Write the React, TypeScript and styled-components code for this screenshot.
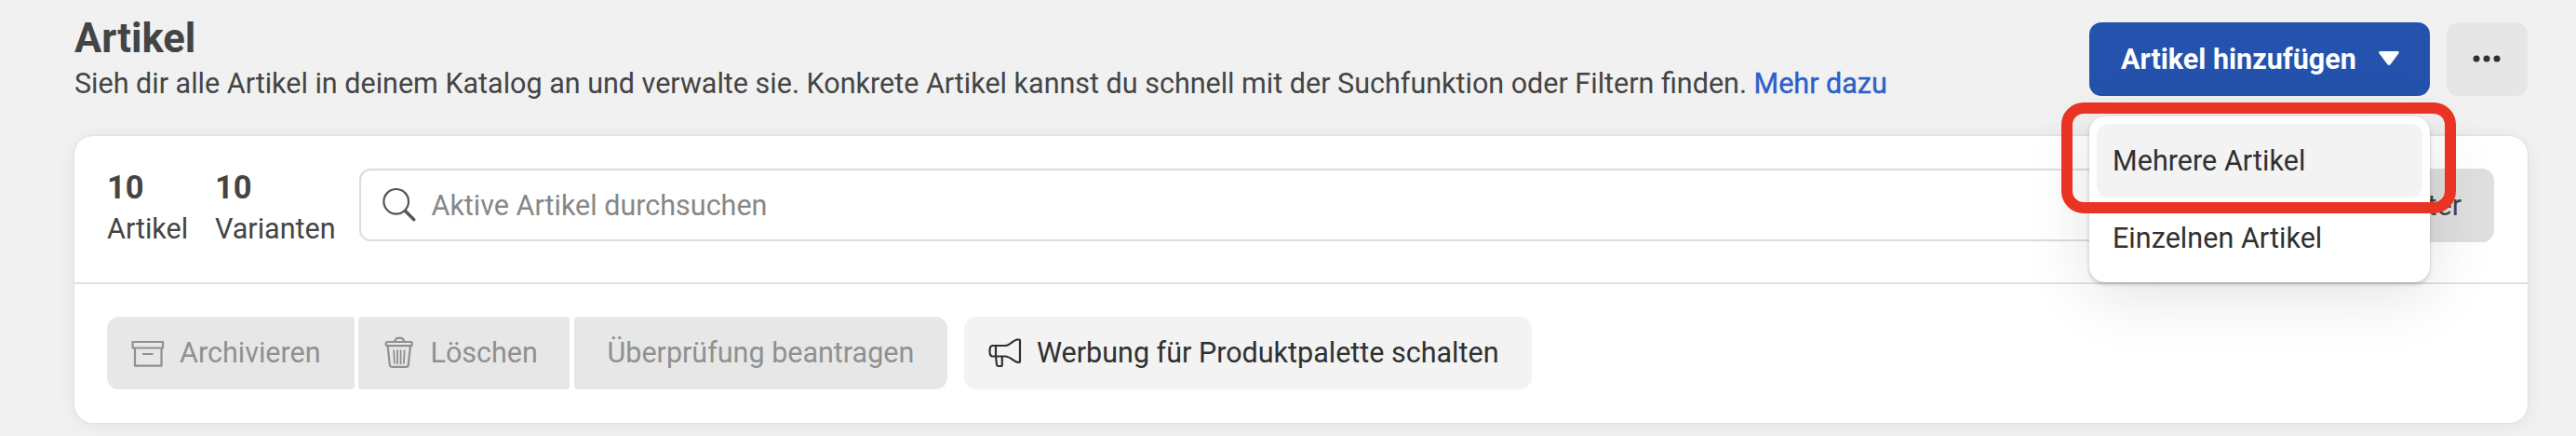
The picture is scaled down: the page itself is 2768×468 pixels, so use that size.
import React from "react";
import styled, { createGlobalStyle } from "styled-components";

const GlobalStyle = createGlobalStyle`
  * { box-sizing: border-box; }
  body {
    margin: 0;
    background: #f1f1f1;
    font-family: Roboto, "Liberation Sans", sans-serif;
    font-size: 30.5px;
    color: #444;
  }
  button { font: inherit; border: 0; margin: 0; letter-spacing: inherit; }
`;

const Page = styled.main`
  width: 2768px;
  height: 468px;
  overflow: hidden;
  padding: 0 52.5px 0 80px;
  display: flex;
  flex-direction: column;
`;

const Header = styled.header`
  height: 145.5px;
  flex: none;
  display: flex;
  justify-content: space-between;
`;

const Heading = styled.div`
  padding-top: 16.5px;
`;

const Title = styled.h1`
  margin: 0;
  font-size: 43.5px;
  line-height: 50px;
  font-weight: 700;
  white-space: nowrap;
`;

const Subtitle = styled.p`
  margin: 4px 0 0;
  line-height: 38px;
  white-space: nowrap;
`;

const Link = styled.a`
  color: #2d5fc9;
  -webkit-text-stroke: 0.4px #2d5fc9;
`;

const HeaderActions = styled.div`
  display: flex;
  gap: 17.5px;
  padding-top: 23.5px;
  align-items: flex-start;
`;

const MenuAnchor = styled.div`
  position: relative;
`;

const PrimaryButton = styled.button`
  width: 366.5px;
  height: 79px;
  border-radius: 13px;
  background: #2452ad;
  color: #fff;
  font-weight: 700;
  display: flex;
  align-items: center;
  gap: 24px;
  padding: 0 0 0 34.5px;
  white-space: nowrap;
`;

const MoreButton = styled.button`
  width: 87px;
  height: 79px;
  border-radius: 13px;
  background: #e6e6e6;
  display: flex;
  align-items: center;
  justify-content: center;
  padding: 0;
`;

const Menu = styled.div`
  position: absolute;
  z-index: 2;
  top: 101px;
  left: 0;
  width: 366.5px;
  height: 178px;
  padding: 8.5px;
  display: flex;
  flex-direction: column;
  gap: 4.5px;
  border-radius: 17px;
  background: #fff;
  box-shadow: 0 2px 4px rgba(0, 0, 0, 0.2), 0 12px 70px rgba(0, 0, 0, 0.12);
`;

const MenuItem = styled.div<{ $active?: boolean }>`
  height: 78.5px;
  flex: none;
  border-radius: 13px;
  background: ${(p) => (p.$active ? "#f3f3f3" : "transparent")};
  color: #303030;
  letter-spacing: 0.04px;
  padding-left: 17px;
  display: flex;
  align-items: center;
`;

const Highlight = styled.div`
  position: absolute;
  z-index: 3;
  top: 86.5px;
  left: -29.5px;
  width: 423.5px;
  height: 119px;
  border: 12px solid #e93323;
  border-radius: 24px;
`;

const Card = styled.section`
  height: 308px;
  flex: none;
  border-radius: 20px;
  background: #fff;
  box-shadow: 0 0 3px rgba(0, 0, 0, 0.1), 0 2px 22px rgba(0, 0, 0, 0.06);
`;

const SearchRow = styled.div`
  height: 159.5px;
  border-bottom: 2.5px solid #dfe1e5;
  padding: 35.5px 35.5px 0 35px;
  display: flex;
`;

const Stat = styled.div<{ $width: number }>`
  width: ${(p) => p.$width}px;
  flex: none;
`;

const StatValue = styled.div`
  font-size: 34.5px;
  font-weight: 700;
  line-height: 40px;
`;

const StatLabel = styled.div`
  line-height: 38px;
  padding-top: 6px;
`;

const SearchField = styled.label`
  flex: 1;
  height: 78px;
  border: 2px solid #dcdcdc;
  border-radius: 12px;
  display: flex;
  align-items: center;
  padding-left: 22.5px;
  gap: 15px;
  color: #878787;
`;

const FilterButton = styled.button`
  width: 168px;
  height: 78.5px;
  margin-left: 17px;
  padding: 0 35px 0 0;
  border-radius: 13px;
  background: #dfdfdf;
  color: #444;
  text-align: right;
`;

const ActionRow = styled.div`
  display: flex;
  padding: 34.5px 0 0 34.5px;
`;

const ButtonGroup = styled.div`
  display: flex;
  gap: 4.5px;
  margin-right: 18px;
`;

const ActionButton = styled.button<{ $width: number; $pad: number; $radius?: string; $enabled?: boolean }>`
  width: ${(p) => p.$width}px;
  height: 78px;
  padding: 0 0 0 ${(p) => p.$pad}px;
  display: flex;
  align-items: center;
  gap: 14.5px;
  white-space: nowrap;
  border-radius: ${(p) => p.$radius ?? "13px"};
  background: ${(p) => (p.$enabled ? "#f3f3f3" : "#e7e7e7")};
  color: ${(p) => (p.$enabled ? "#303030" : "#909090")};
`;

const Icon = styled.svg`
  flex: none;
  display: block;
  fill: none;
  stroke: currentColor;
  stroke-width: 2.2;
  stroke-linejoin: round;
`;

const SearchIcon = () => (
  <Icon width="38" height="38" viewBox="0 0 38 38" color="#555">
    <circle cx="14.7" cy="15.3" r="13.3" />
    <path d="M24.3 25.3 33.8 34.8" strokeWidth="3.4" strokeLinecap="round" />
  </Icon>
);

const ArchiveIcon = () => (
  <Icon width="40" height="40" viewBox="0 0 40 40">
    <path d="M3.6 8h32.400v6.500H3.600zM6 14.500h28.500v19.200H6zM14 21h11.500" />
  </Icon>
);

const TrashIcon = () => (
  <Icon width="38" height="40" viewBox="0 0 38 40">
    <rect x="4.800" y="8" width="28" height="4.200" rx="1.400" />
    <path d="M13.800 8c.8-2.400 1.800-4.200 3.800-4.200h3.200c2 0 3 1.800 3.800 4.200M6.600 12.200l2.200 20.300c.2 1.600.9 2.300 2.300 2.300h15.400c1.400 0 2.100-.7 2.300-2.300L31 12.200" />
    <path d="M13.200 16.500l.7 15M17 16.500v15.500M20.600 16.500v15.500M24.600 16.500l-.7 15" strokeWidth="1.800" />
  </Icon>
);

const MegaphoneIcon = () => (
  <Icon width="40" height="40" viewBox="0 0 40 40">
    <path d="M6.500 12H20c5.500 0 8.500-6.300 13.300-6.500h1.700c.7 0 1 .4 1 1v22.400c0 .7-.4 1-1 1h-1.300C28.800 29.300 26 23.500 20 23.500H6.500c-2 0-3-2-3-5.700s1-5.800 3-5.800zM10 12v11.500M10 23.500l1 9c.1 1 .6 1.500 1.500 1.500h2.800c1 0 1.500-.5 1.500-1.500v-9" />
  </Icon>
);

const CaretIcon = () => (
  <svg width="22" height="16" viewBox="0 0 22 16" fill="#fff">
    <path d="M1.500 0h19c1.300 0 1.700 1.500.8 2.600l-8.600 11.300c-1 1.300-2.400 1.300-3.400 0L.7 2.600C-.2 1.500.2 0 1.500 0z" />
  </svg>
);

const DotsIcon = () => (
  <svg width="32" height="10" viewBox="0 0 32 10" fill="#303030">
    <circle cx="5" cy="5" r="3.5" />
    <circle cx="16" cy="5" r="3.5" />
    <circle cx="27" cy="5" r="3.5" />
  </svg>
);

export default function App() {
  return (
    <>
      <GlobalStyle />
      <Page>
        <Header>
          <Heading>
            <Title>Artikel</Title>
            <Subtitle>
              Sieh dir alle Artikel in deinem Katalog an und verwalte sie. Konkrete Artikel kannst du
              schnell mit der Suchfunktion oder Filtern finden. <Link>Mehr dazu</Link>
            </Subtitle>
          </Heading>
          <HeaderActions>
            <MenuAnchor>
              <PrimaryButton>
                Artikel hinzufügen
                <CaretIcon />
              </PrimaryButton>
              <Menu>
                <MenuItem $active>Mehrere Artikel</MenuItem>
                <MenuItem>Einzelnen Artikel</MenuItem>
              </Menu>
              <Highlight />
            </MenuAnchor>
            <MoreButton aria-label="Mehr">
              <DotsIcon />
            </MoreButton>
          </HeaderActions>
        </Header>
        <Card>
          <SearchRow>
            <Stat $width={116}>
              <StatValue>10</StatValue>
              <StatLabel>Artikel</StatLabel>
            </Stat>
            <Stat $width={155}>
              <StatValue>10</StatValue>
              <StatLabel>Varianten</StatLabel>
            </Stat>
            <SearchField>
              <SearchIcon />
              Aktive Artikel durchsuchen
            </SearchField>
            <FilterButton>Filter</FilterButton>
          </SearchRow>
          <ActionRow>
            <ButtonGroup>
              <ActionButton $width={266} $pad={24} $radius="13px 4px 4px 13px">
                <ArchiveIcon />
                Archivieren
              </ActionButton>
              <ActionButton $width={227} $pad={25} $radius="4px">
                <TrashIcon />
                Löschen
              </ActionButton>
              <ActionButton $width={401} $pad={36} $radius="4px 13px 13px 4px">
                Überprüfung beantragen
              </ActionButton>
            </ButtonGroup>
            <ActionButton $width={610.5} $pad={24} $enabled>
              <MegaphoneIcon />
              Werbung für Produktpalette schalten
            </ActionButton>
          </ActionRow>
        </Card>
      </Page>
    </>
  );
}
